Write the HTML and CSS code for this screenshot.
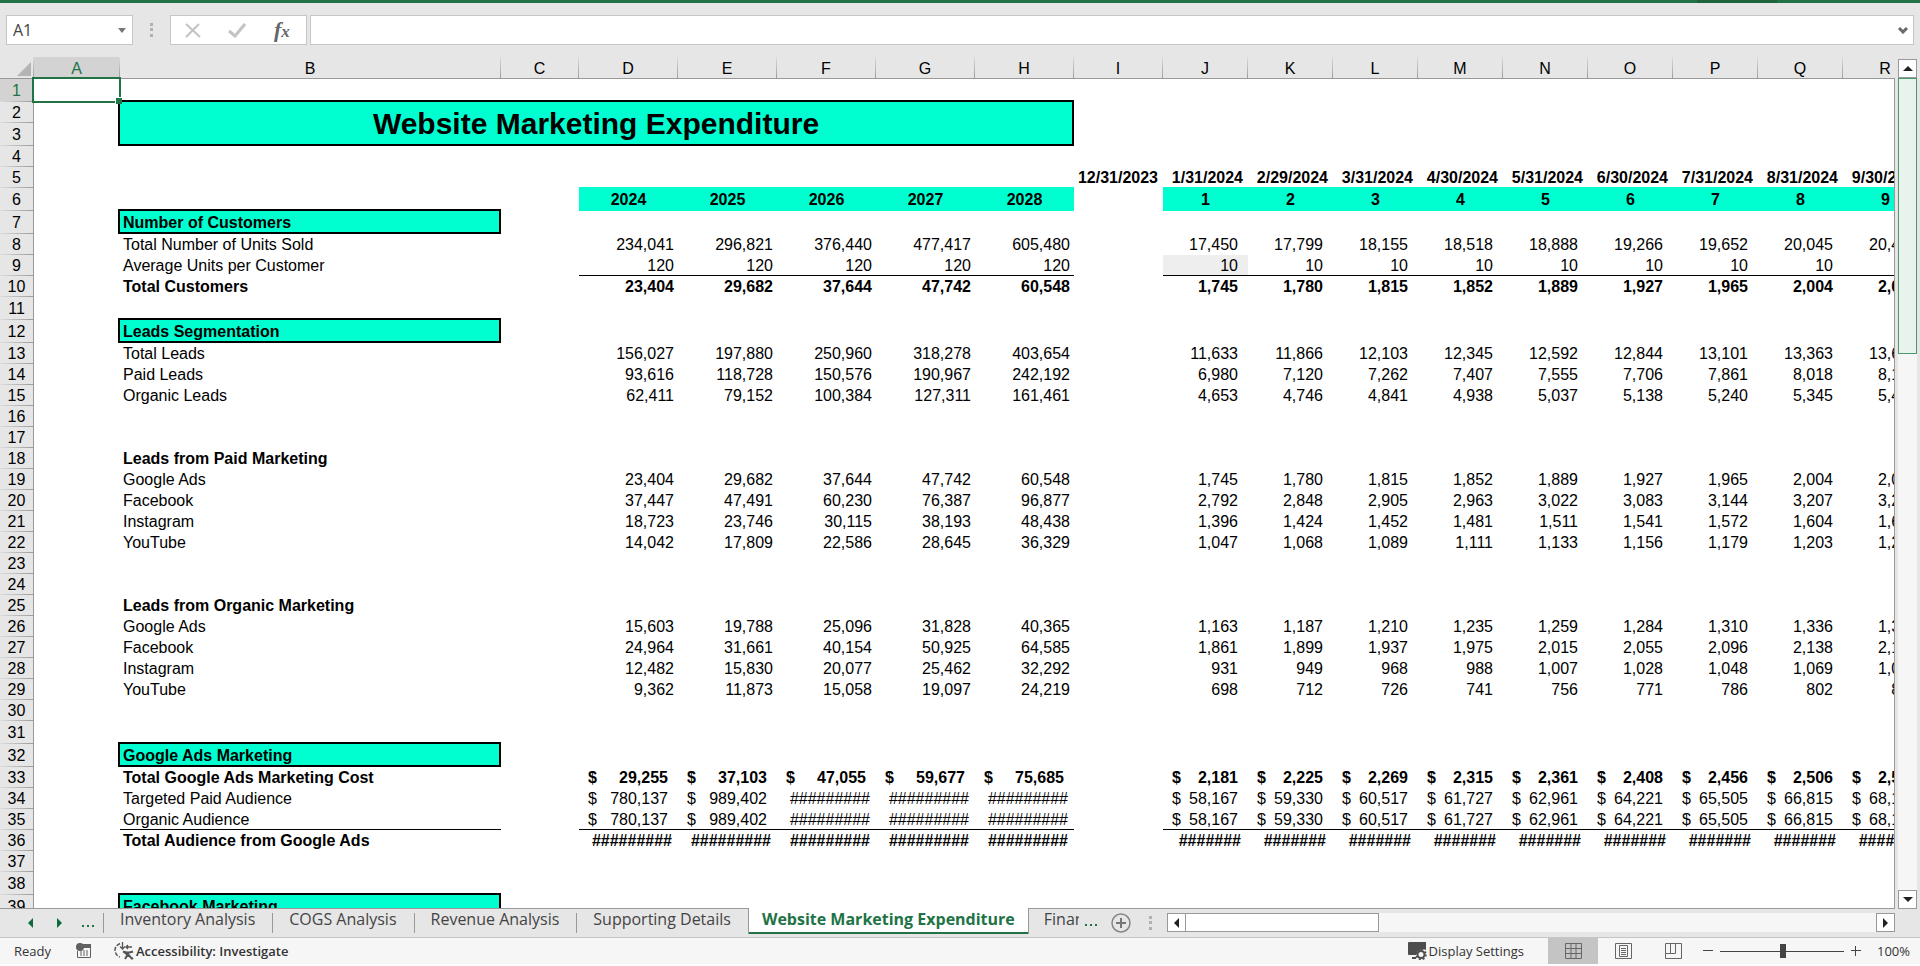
FILE: index.html
```html
<!DOCTYPE html>
<html lang="en">
<head>
<meta charset="utf-8">
<title>Website Marketing Expenditure</title>
<link rel="stylesheet" href="styles.css">
</head>
<body>
<div class="title-strip"></div>
<header class="formula-bar">
  <div class="name-box">
    <input class="name-input" type="text" value="A1" aria-label="Name box">
    <button class="name-drop" type="button" aria-label="Open names"><svg width="8" height="5" viewBox="0 0 8 5"><path d="M0 0h8L4 5z" fill="#777"/></svg></button>
  </div>
  <div class="grip"><svg width="3" height="14" viewBox="0 0 3 14"><path d="M0 0h3v3H0zM0 5h3v3H0zM0 11h3v3H0z" fill="#b0b0b0"/></svg></div>
  <div class="fx-tools">
    <button type="button" aria-label="Cancel"><svg width="16" height="15" viewBox="0 0 16 15"><path d="M1 1l14 13M14 1L1 14" stroke="#c3c3c3" stroke-width="2" fill="none"/></svg></button>
    <button type="button" aria-label="Enter"><svg width="18" height="15" viewBox="0 0 18 15"><path d="M1 8l6 5L17 1" stroke="#c3c3c3" stroke-width="3" fill="none"/></svg></button>
    <button type="button" class="fx" aria-label="Insert function">f<span>x</span></button>
  </div>
  <div class="formula-box">
    <input class="formula-input" type="text" aria-label="Formula">
    <button class="expand" type="button" aria-label="Expand formula bar"><svg width="10" height="7" viewBox="0 0 10 7"><path d="M1 1l4 4 4-4" stroke="#6a6a6a" stroke-width="3" fill="none"/></svg></button>
  </div>
</header>

<main class="workspace">
<div class="grid">
<table class="sheet">
<colgroup><col class="c-head"><col class="c-a"><col class="c-b"><col class="c-c"><col class="c-year" span="5"><col class="c-i"><col class="c-month" span="9"></colgroup>
<thead>
<tr><th class="corner"><svg width="14" height="14" viewBox="0 0 14 14"><path d="M14 0v14H0z" fill="#b4b4b4"/></svg></th><th scope="col" class="on">A</th><th scope="col">B</th><th scope="col">C</th><th scope="col">D</th><th scope="col">E</th><th scope="col">F</th><th scope="col">G</th><th scope="col">H</th><th scope="col">I</th><th scope="col">J</th><th scope="col">K</th><th scope="col">L</th><th scope="col">M</th><th scope="col">N</th><th scope="col">O</th><th scope="col">P</th><th scope="col">Q</th><th scope="col">R</th></tr>
</thead>
<tbody>
<tr class="tall"><th scope="row" class="on">1</th><td class="selected"></td><td colspan="17"></td></tr>
<tr><th scope="row">2</th><td></td><td class="boxed title" colspan="7" rowspan="2">Website Marketing Expenditure</td><td colspan="10"></td></tr>
<tr class="tall"><th scope="row">3</th><td></td><td colspan="10"></td></tr>
<tr><th scope="row">4</th><td colspan="18"></td></tr>
<tr class="dates"><th scope="row">5</th><td></td><td></td><td></td><td></td><td></td><td></td><td></td><td></td><td>12/31/2023</td><td>1/31/2024</td><td>2/29/2024</td><td>3/31/2024</td><td>4/30/2024</td><td>5/31/2024</td><td>6/30/2024</td><td>7/31/2024</td><td>8/31/2024</td><td>9/30/2024</td></tr>
<tr class="tall periods"><th scope="row">6</th><td></td><td></td><td></td><td class="band">2024</td><td class="band">2025</td><td class="band">2026</td><td class="band">2027</td><td class="band">2028</td><td></td><td class="band">1</td><td class="band">2</td><td class="band">3</td><td class="band">4</td><td class="band">5</td><td class="band">6</td><td class="band">7</td><td class="band">8</td><td class="band">9</td></tr>
<tr class="tall"><th scope="row">7</th><td></td><td class="boxed">Number of Customers</td><td colspan="16"></td></tr>
<tr><th scope="row">8</th><td></td><td>Total Number of Units Sold</td><td></td><td>234,041</td><td>296,821</td><td>376,440</td><td>477,417</td><td>605,480</td><td></td><td>17,450</td><td>17,799</td><td>18,155</td><td>18,518</td><td>18,888</td><td>19,266</td><td>19,652</td><td>20,045</td><td>20,446</td></tr>
<tr class="ruled"><th scope="row">9</th><td></td><td>Average Units per Customer</td><td></td><td>120</td><td>120</td><td>120</td><td>120</td><td>120</td><td></td><td class="input-cell">10</td><td>10</td><td>10</td><td>10</td><td>10</td><td>10</td><td>10</td><td>10</td><td>10</td></tr>
<tr class="total"><th scope="row">10</th><td></td><td>Total Customers</td><td></td><td>23,404</td><td>29,682</td><td>37,644</td><td>47,742</td><td>60,548</td><td></td><td>1,745</td><td>1,780</td><td>1,815</td><td>1,852</td><td>1,889</td><td>1,927</td><td>1,965</td><td>2,004</td><td>2,045</td></tr>
<tr class="tall"><th scope="row">11</th><td colspan="18"></td></tr>
<tr class="tall"><th scope="row">12</th><td></td><td class="boxed">Leads Segmentation</td><td colspan="16"></td></tr>
<tr><th scope="row">13</th><td></td><td>Total Leads</td><td></td><td>156,027</td><td>197,880</td><td>250,960</td><td>318,278</td><td>403,654</td><td></td><td>11,633</td><td>11,866</td><td>12,103</td><td>12,345</td><td>12,592</td><td>12,844</td><td>13,101</td><td>13,363</td><td>13,631</td></tr>
<tr><th scope="row">14</th><td></td><td>Paid Leads</td><td></td><td>93,616</td><td>118,728</td><td>150,576</td><td>190,967</td><td>242,192</td><td></td><td>6,980</td><td>7,120</td><td>7,262</td><td>7,407</td><td>7,555</td><td>7,706</td><td>7,861</td><td>8,018</td><td>8,178</td></tr>
<tr><th scope="row">15</th><td></td><td>Organic Leads</td><td></td><td>62,411</td><td>79,152</td><td>100,384</td><td>127,311</td><td>161,461</td><td></td><td>4,653</td><td>4,746</td><td>4,841</td><td>4,938</td><td>5,037</td><td>5,138</td><td>5,240</td><td>5,345</td><td>5,452</td></tr>
<tr><th scope="row">16</th><td colspan="18"></td></tr>
<tr><th scope="row">17</th><td colspan="18"></td></tr>
<tr class="total"><th scope="row">18</th><td></td><td>Leads from Paid Marketing</td><td colspan="16"></td></tr>
<tr><th scope="row">19</th><td></td><td>Google Ads</td><td></td><td>23,404</td><td>29,682</td><td>37,644</td><td>47,742</td><td>60,548</td><td></td><td>1,745</td><td>1,780</td><td>1,815</td><td>1,852</td><td>1,889</td><td>1,927</td><td>1,965</td><td>2,004</td><td>2,045</td></tr>
<tr><th scope="row">20</th><td></td><td>Facebook</td><td></td><td>37,447</td><td>47,491</td><td>60,230</td><td>76,387</td><td>96,877</td><td></td><td>2,792</td><td>2,848</td><td>2,905</td><td>2,963</td><td>3,022</td><td>3,083</td><td>3,144</td><td>3,207</td><td>3,271</td></tr>
<tr><th scope="row">21</th><td></td><td>Instagram</td><td></td><td>18,723</td><td>23,746</td><td>30,115</td><td>38,193</td><td>48,438</td><td></td><td>1,396</td><td>1,424</td><td>1,452</td><td>1,481</td><td>1,511</td><td>1,541</td><td>1,572</td><td>1,604</td><td>1,636</td></tr>
<tr><th scope="row">22</th><td></td><td>YouTube</td><td></td><td>14,042</td><td>17,809</td><td>22,586</td><td>28,645</td><td>36,329</td><td></td><td>1,047</td><td>1,068</td><td>1,089</td><td>1,111</td><td>1,133</td><td>1,156</td><td>1,179</td><td>1,203</td><td>1,227</td></tr>
<tr><th scope="row">23</th><td colspan="18"></td></tr>
<tr><th scope="row">24</th><td colspan="18"></td></tr>
<tr class="total"><th scope="row">25</th><td></td><td>Leads from Organic Marketing</td><td colspan="16"></td></tr>
<tr><th scope="row">26</th><td></td><td>Google Ads</td><td></td><td>15,603</td><td>19,788</td><td>25,096</td><td>31,828</td><td>40,365</td><td></td><td>1,163</td><td>1,187</td><td>1,210</td><td>1,235</td><td>1,259</td><td>1,284</td><td>1,310</td><td>1,336</td><td>1,363</td></tr>
<tr><th scope="row">27</th><td></td><td>Facebook</td><td></td><td>24,964</td><td>31,661</td><td>40,154</td><td>50,925</td><td>64,585</td><td></td><td>1,861</td><td>1,899</td><td>1,937</td><td>1,975</td><td>2,015</td><td>2,055</td><td>2,096</td><td>2,138</td><td>2,181</td></tr>
<tr><th scope="row">28</th><td></td><td>Instagram</td><td></td><td>12,482</td><td>15,830</td><td>20,077</td><td>25,462</td><td>32,292</td><td></td><td>931</td><td>949</td><td>968</td><td>988</td><td>1,007</td><td>1,028</td><td>1,048</td><td>1,069</td><td>1,090</td></tr>
<tr><th scope="row">29</th><td></td><td>YouTube</td><td></td><td>9,362</td><td>11,873</td><td>15,058</td><td>19,097</td><td>24,219</td><td></td><td>698</td><td>712</td><td>726</td><td>741</td><td>756</td><td>771</td><td>786</td><td>802</td><td>818</td></tr>
<tr><th scope="row">30</th><td colspan="18"></td></tr>
<tr class="tall"><th scope="row">31</th><td colspan="18"></td></tr>
<tr class="tall"><th scope="row">32</th><td></td><td class="boxed">Google Ads Marketing</td><td colspan="16"></td></tr>
<tr class="total money"><th scope="row">33</th><td></td><td>Total Google Ads Marketing Cost</td><td></td><td><span>$</span>29,255</td><td><span>$</span>37,103</td><td><span>$</span>47,055</td><td><span>$</span>59,677</td><td><span>$</span>75,685</td><td></td><td><span>$</span>2,181</td><td><span>$</span>2,225</td><td><span>$</span>2,269</td><td><span>$</span>2,315</td><td><span>$</span>2,361</td><td><span>$</span>2,408</td><td><span>$</span>2,456</td><td><span>$</span>2,506</td><td><span>$</span>2,556</td></tr>
<tr class="money"><th scope="row">34</th><td></td><td>Targeted Paid Audience</td><td></td><td><span>$</span>780,137</td><td><span>$</span>989,402</td><td class="hash">#########</td><td class="hash">#########</td><td class="hash">#########</td><td></td><td><span>$</span>58,167</td><td><span>$</span>59,330</td><td><span>$</span>60,517</td><td><span>$</span>61,727</td><td><span>$</span>62,961</td><td><span>$</span>64,221</td><td><span>$</span>65,505</td><td><span>$</span>66,815</td><td><span>$</span>68,151</td></tr>
<tr class="money ruled ruled-label"><th scope="row">35</th><td></td><td>Organic Audience</td><td></td><td><span>$</span>780,137</td><td><span>$</span>989,402</td><td class="hash">#########</td><td class="hash">#########</td><td class="hash">#########</td><td></td><td><span>$</span>58,167</td><td><span>$</span>59,330</td><td><span>$</span>60,517</td><td><span>$</span>61,727</td><td><span>$</span>62,961</td><td><span>$</span>64,221</td><td><span>$</span>65,505</td><td><span>$</span>66,815</td><td><span>$</span>68,151</td></tr>
<tr class="total"><th scope="row">36</th><td></td><td>Total Audience from Google Ads</td><td></td><td class="hash">#########</td><td class="hash">#########</td><td class="hash">#########</td><td class="hash">#########</td><td class="hash">#########</td><td></td><td class="hash">#######</td><td class="hash">#######</td><td class="hash">#######</td><td class="hash">#######</td><td class="hash">#######</td><td class="hash">#######</td><td class="hash">#######</td><td class="hash">#######</td><td class="hash">#######</td></tr>
<tr><th scope="row">37</th><td colspan="18"></td></tr>
<tr class="tall"><th scope="row">38</th><td colspan="18"></td></tr>
<tr class="tall"><th scope="row">39</th><td></td><td class="boxed">Facebook Marketing</td><td colspan="16"></td></tr>
</tbody>
</table>
</div>
<div class="vscroll">
  <button type="button" class="scroll-btn" aria-label="Scroll up"><svg width="10" height="5" viewBox="0 0 10 5"><path d="M5 0l5 5H0z" fill="#222"/></svg></button>
  <div class="vtrack"><div class="vthumb"></div></div>
  <button type="button" class="scroll-btn" aria-label="Scroll down"><svg width="10" height="5" viewBox="0 0 10 5"><path d="M0 0h10L5 5z" fill="#222"/></svg></button>
</div>
</main>

<div class="tab-bar">
  <nav class="tabs" aria-label="Sheets">
    <div class="tab-nav">
      <button type="button" aria-label="Previous sheet"><svg width="5" height="10" viewBox="0 0 5 10"><path d="M5 0v10L0 5z" fill="#0b6b3a"/></svg></button>
      <button type="button" aria-label="Next sheet"><svg width="5" height="10" viewBox="0 0 5 10"><path d="M0 0v10l5-5z" fill="#0b6b3a"/></svg></button>
      <button type="button" aria-label="More sheets to the left"><svg width="14" height="9" viewBox="0 0 14 9"><path d="M0 6h2v2H0zM5 6h2v2H5zM10 6h2v2h-2z" fill="#217346"/></svg></button>
    </div>
    <button type="button" class="tab">Inventory Analysis</button>
    <button type="button" class="tab">COGS Analysis</button>
    <button type="button" class="tab">Revenue Analysis</button>
    <button type="button" class="tab">Supporting Details</button>
    <button type="button" class="tab active">Website Marketing Expenditure</button>
    <button type="button" class="tab cut">Financial</button>
    <button type="button" class="more" aria-label="More sheets to the right"><svg width="14" height="3" viewBox="0 0 14 3"><path d="M0 0h2v2H0zM5 0h2v2H5zM10 0h2v2h-2z" fill="#217346"/></svg></button>
    <button type="button" class="add" aria-label="New sheet"><svg width="20" height="20" viewBox="0 0 20 20"><circle cx="10" cy="10" r="9" fill="none" stroke="#868686" stroke-width="1.5"/><path d="M10 5v10M5 10h10" stroke="#777" stroke-width="2"/></svg></button>
    <svg class="tab-grip" width="3" height="14" viewBox="0 0 3 14"><path d="M0 0h3v3H0zM0 5h3v3H0zM0 11h3v3H0z" fill="#b0b0b0"/></svg>
  </nav>
  <div class="hscroll">
    <button type="button" class="scroll-btn" aria-label="Scroll left"><svg width="5" height="10" viewBox="0 0 5 10"><path d="M5 0v10L0 5z" fill="#222"/></svg></button>
    <div class="htrack"><div class="hthumb"></div></div>
    <button type="button" class="scroll-btn" aria-label="Scroll right"><svg width="5" height="10" viewBox="0 0 5 10"><path d="M0 0v10l5-5z" fill="#222"/></svg></button>
  </div>
</div>

<footer class="status">
  <span class="ready">Ready</span>
  <button type="button" class="macro" aria-label="Record macro"><svg width="16" height="16" viewBox="0 0 16 16"><circle cx="4" cy="4" r="4" fill="#606060"/><path d="M7 1h8v4H7z" fill="#606060"/><path d="M1.500 8v6.500h13V4" fill="none" stroke="#606060"/><path d="M4 8h2M7 8h2M10 8h2M4 10h2M7 10h2M10 10h2M4 12h2M7 12h2M10 12h2" stroke="#606060"/></svg></button>
  <button type="button" class="access"><svg width="20" height="18" viewBox="0 0 20 18"><path d="M6 1.500C3 3 1 5 1 8s2 6 5 7" fill="none" stroke="#555" stroke-width="1.500" stroke-dasharray="4 1.500"/><path d="M8.500 0v7M6 4.500l2.500 2.500L11 4.500M18 5h-6M14 3l-2 2 2 2" fill="none" stroke="#555" stroke-width="1.300"/><path d="M9 9.500q5 2 10 0M11 17l3-5 4 5M10 10l9 7" fill="none" stroke="#555" stroke-width="2"/></svg>Accessibility: Investigate</button>
  <button type="button" class="display"><svg width="19" height="18" viewBox="0 0 19 18"><path d="M1 0h17v8l-3-1-5 2-2 4H1q-1 0-1-1V1q0-1 1-1zM4 15h4v2H4z" fill="#4d4d4d"/><circle cx="13" cy="12.500" r="3.500" fill="none" stroke="#4d4d4d" stroke-width="2"/><circle cx="13" cy="12.500" r="5" fill="none" stroke="#4d4d4d" stroke-width="1.500" stroke-dasharray="2 1.900"/></svg>Display Settings</button>
  <div class="views">
    <button type="button" class="current" aria-label="Normal"><svg width="17" height="16" viewBox="0 0 17 16"><path d="M.5.5h16v15H.5zM.5 5.500h16M.5 10.500h16M6 .5v15M11 .5v15" fill="none" stroke="#666"/></svg></button>
    <button type="button" aria-label="Page layout"><svg width="17" height="16" viewBox="0 0 17 16"><path d="M.5.5h16v15H.5zM4.500 2.500h8v11h-8zM6 5.500h5M6 7.500h5M6 9.500h5M6 11.500h5" fill="none" stroke="#666"/></svg></button>
    <button type="button" aria-label="Page break preview"><svg width="17" height="16" viewBox="0 0 17 16"><path d="M.5.5h16v15H.5zM.5 10.500h10V.5M5.500 .5v10" fill="none" stroke="#666"/></svg></button>
  </div>
  <button type="button" class="zoom-step" aria-label="Zoom out"><svg width="10" height="10" viewBox="0 0 10 10"><path d="M0 4.500h10" stroke="#444"/></svg></button>
  <input class="zoom" type="range" min="0" max="100" value="51" aria-label="Zoom">
  <button type="button" class="zoom-step" aria-label="Zoom in"><svg width="10" height="10" viewBox="0 0 10 10"><path d="M0 4.500h10M4.500 0v10" stroke="#444"/></svg></button>
  <span class="percent">100%</span>
</footer>
</body>
</html>
```

FILE: styles.css
```css
* { box-sizing: border-box; }

body {
  margin: 0;
  height: 100vh;
  padding-bottom: 2px;
  display: flex;
  flex-direction: column;
  overflow: hidden;
  background: #fff;
  color: #000;
  font-family: "Open Sans", "Noto Sans", sans-serif;
}

button {
  margin: 0;
  padding: 0;
  border: 0;
  background: none;
  font: inherit;
  color: inherit;
  display: flex;
  align-items: center;
  justify-content: center;
}

svg { display: block; flex: none; }

.title-strip {
  flex: none;
  height: 3px;
  padding-right: 143px;
  background: #217346;
  display: flex;
  justify-content: flex-end;
}
.title-strip::after { content: ""; width: 80px; background: #1e633c; }

/* formula bar */
.formula-bar {
  flex: none;
  height: 54px;
  padding: 12px 6px 12px 6px;
  display: flex;
  background: #e6e6e6;
}
.name-box, .fx-tools, .formula-box {
  display: flex;
  background: #fff;
  border: 1px solid #c6c6c6;
}
.name-box { width: 127px; padding: 0 6px; }
.name-input, .formula-input {
  flex: 1;
  min-width: 0;
  padding: 0;
  border: 0;
  outline: 0;
  background: none;
  color: #444;
  font: 16px "Open Sans", "Noto Sans", sans-serif;
}
.grip { width: 37px; display: flex; align-items: center; justify-content: center; }
.fx-tools { width: 137px; padding: 0 2px 0 0; }
.fx-tools button { flex: 1; }
.fx {
  color: #666;
  font: italic bold 22px "Liberation Serif", serif;
}
.fx span { font-size: 17px; padding-top: 4px; }
.formula-box { flex: 1; margin-left: 3px; padding: 0 5px; }

/* worksheet */
.workspace {
  flex: 1;
  min-height: 0;
  display: flex;
  background: #e6e6e6;
}
.grid {
  position: relative;
  flex: 1;
  min-width: 0;
  overflow: hidden;
  background: #fff;
  border-bottom: 1px solid #999;
}
.grid::after {
  content: "";
  position: absolute;
  top: 21px;
  right: 0;
  bottom: 0;
  width: 1px;
  background: #999;
}
.sheet {
  width: 1928px;
  table-layout: fixed;
  border-collapse: separate;
  border-spacing: 0;
  font: 16px "Liberation Sans", Arial, sans-serif;
  white-space: nowrap;
}
.c-head { width: 34px; }
.c-a { width: 86px; }
.c-b { width: 381px; }
.c-c { width: 78px; }
.c-year { width: 99px; }
.c-i { width: 89px; }
.c-month { width: 85px; }

.sheet th, .sheet td { padding: 0; height: 21px; line-height: 21px; }
.sheet .tall th, .sheet .tall td { height: 23px; line-height: 23px; }
.sheet th { font-weight: normal; background-color: #e6e6e6; }

.sheet thead th {
  height: 22px;
  padding: 2px 1px 0 0;
  line-height: 20px;
  background-image: linear-gradient(#999, #999), linear-gradient(#dcdcdc, #999);
  background-size: 100% 1px, 1px 100%;
  background-position: left bottom, right top;
  background-repeat: no-repeat;
}
.sheet tbody th {
  padding-right: 1px;
  background-image: linear-gradient(#999, #999), linear-gradient(90deg, #dcdcdc, #999);
  background-size: 1px 100%, 100% 1px;
  background-position: right top, left bottom;
  background-repeat: no-repeat;
}
.sheet th.on { background-color: #d3d3d3; color: #217346; }
.corner svg { margin: 0 2px 0 auto; }

.sheet td { text-align: right; padding-right: 4px; }
.sheet td:nth-child(3) { text-align: left; padding-left: 3px; }
.sheet td:nth-child(n+11) { padding-right: 10px; }

.sheet .dates td:nth-child(n) { font-weight: bold; padding-right: 5px; }
.sheet .periods td:nth-child(n) { font-weight: bold; text-align: center; padding: 0; }
.sheet .band { background: #00ffd0; box-shadow: 0 -1px #00ffd0; }
.total { font-weight: bold; }
.input-cell { background: #eee; }

.ruled td:nth-child(n+5):not(:nth-child(10)),
.ruled-label td:nth-child(3) { box-shadow: inset 0 -1px #000; }

.sheet .money td:nth-child(n+5) { padding-left: 9px; padding-right: 10px; }
.money span { float: left; }
.sheet tr td.hash:nth-child(n) { padding-left: 0; padding-right: 6px; }
.sheet tr td.hash:nth-child(n+11) { padding-right: 7px; }

.sheet .boxed { position: relative; background: #00ffd0; font-weight: bold; }
.boxed::after {
  content: "";
  position: absolute;
  inset: -2px 0 0 -2px;
  border: 2px solid #000;
}
.sheet td.title:nth-child(3) { text-align: center; font-size: 30px; line-height: 44px; padding: 0 2px 0 0; }

.selected { position: relative; z-index: 1; }
.selected::before {
  content: "";
  position: absolute;
  inset: -2px -1px -1px -2px;
  border: 2px solid #217346;
}
.selected::after {
  content: "";
  position: absolute;
  right: -2px;
  bottom: -2px;
  width: 6px;
  height: 6px;
  background: #217346;
  border-top: 1px solid #fff;
  border-left: 1px solid #fff;
}

/* scroll bars */
.scroll-btn {
  flex: none;
  width: 19px;
  height: 19px;
  background: #fff;
  border: 1px solid #999;
}
.vscroll {
  width: 25px;
  padding: 2px 3px 0;
  display: flex;
  flex-direction: column;
}
.vtrack { flex: 1; background: #f6f6f6; }
.vthumb { height: 34%; background: #e9f3ee; border: 1px solid #4a9a6c; }

.hscroll { flex: 1; display: flex; padding: 4px 25px 5px 0; }
.htrack { flex: 1; background: #f6f6f6; }
.hthumb { width: 28%; height: 19px; background: #fff; border: 1px solid #999; border-left: 0; }

/* sheet tabs */
.tab-bar { flex: none; height: 28px; display: flex; background: #e6e6e6; }
.tabs {
  flex: none;
  width: 1167px;
  display: flex;
  align-items: flex-start;
  color: #444;
  font-size: 16px;
}
.tab-nav { width: 103px; height: 28px; padding-left: 16px; display: flex; }
.tab-nav button { width: 29px; }
.tab {
  height: 24px;
  padding: 0 17px;
  line-height: 20px;
  align-items: flex-start;
  white-space: nowrap;
  background: linear-gradient(#999, #999) left bottom / 1px 20px no-repeat;
}
.tab.active {
  height: 26px;
  margin-top: -1px;
  padding: 1px 13px 0;
  color: #217346;
  font-weight: bold;
  background: #fff;
  border: solid #999;
  border-width: 0 1px;
  box-shadow: inset 0 -2px #217346;
  position: relative;
}
.tab.cut { width: 50px; padding: 0 0 0 15px; justify-content: flex-start; overflow: hidden; background: none; }
.more { height: 32px; margin-left: 6px; }
.add { height: 28px; margin-left: 12px; }
.tab-grip { margin: 7px 0 0 18px; }

/* status bar */
.status {
  flex: none;
  height: 27px;
  padding: 0 11px 0 14px;
  display: flex;
  align-items: center;
  background: #f6f6f6;
  border-top: 1px solid #c6c6c6;
  color: #333;
  font-size: 13px;
}
.macro { margin-left: 25px; }
.access { margin-left: 22px; gap: 2px; font-weight: 600; }
.display { margin-left: auto; gap: 2px; }
.views { display: flex; align-self: stretch; margin-left: 24px; }
.views button { width: 50px; }
.views .current { background: #c4c4c4; }
.zoom-step { margin-left: 5px; }
.zoom { appearance: none; width: 124px; height: 15px; margin: 0 2px 0 7px; background: linear-gradient(#444, #444) center / 100% 1px no-repeat; }
.zoom::-webkit-slider-thumb { appearance: none; width: 6px; height: 14px; background: #444; }
.percent { width: 32px; margin-left: 16px; text-align: right; }
```
